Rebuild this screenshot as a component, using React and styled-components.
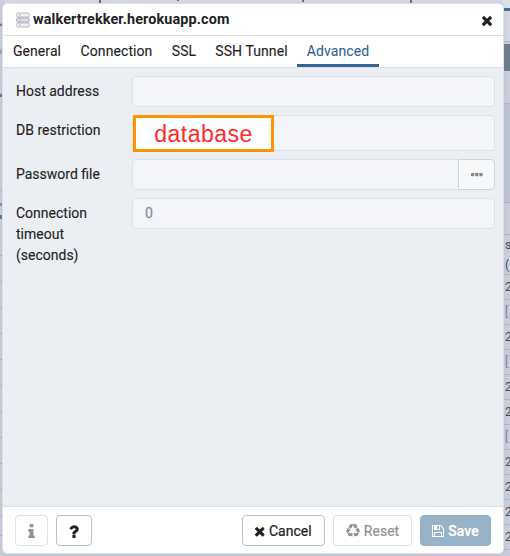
import React from 'react';
import styled, { createGlobalStyle } from 'styled-components';

const GlobalStyle = createGlobalStyle`
  * { box-sizing: border-box; }
  body { margin: 0; overflow: hidden; font-family: Roboto, "Liberation Sans", sans-serif; color: #222; }
  button, input { font: inherit; }
`;

const Screen = styled.div`
  position: relative;
  width: 510px;
  height: 556px;
  overflow: hidden;
  background: #c9cddb;
`;

const Backdrop = styled.div`
  display: grid;
  grid-template-columns: 4px 1fr 7px;
  height: 556px;
`;

const Column = styled.div`
  display: flex;
  flex-direction: column;
  overflow: hidden;
`;

const TopEdge = styled.div`
  height: 4px;
  display: grid;
  grid-template-columns: 78px 125px 108px 1fr;
  padding-left: 95px;
  background: #d9dbe3;
`;

const Tick = styled.i`
  width: 2px;
  height: ${(p) => p.$h || 2}px;
  background: #656975;
`;

const Strip = styled.div`
  flex: none;
  height: ${(p) => p.$h}px;
  background: ${(p) => p.$bg || '#cbcfdb'};
  border-bottom: ${(p) => (p.$line ? '1px solid #adb4c6' : '0')};
`;

const GridCell = styled.div`
  flex: none;
  height: ${(p) => p.$h || 25}px;
  padding-left: 2px;
  border-bottom: 1px solid #b0b6c7;
  background: #cbcfdb;
  color: ${(p) => (p.$muted ? '#7984a1' : '#454a56')};
  font-size: 12px;
  line-height: ${(p) => p.$lh || 24}px;
  white-space: pre;
`;

const Dialog = styled.section`
  position: absolute;
  left: 2px;
  top: 3px;
  width: 502px;
  height: 551px;
  display: flex;
  flex-direction: column;
  overflow: hidden;
  background: #fff;
  border: 1px solid #dde0e6;
  border-radius: 5px;
  box-shadow: 0 0 5px #8d97b044;
`;

const Header = styled.header`
  flex: none;
  display: flex;
  align-items: center;
  height: 32px;
  padding: 0 11px 0 13px;
  border-bottom: 1px solid #dde0e6;
`;

const Title = styled.h1`
  margin: 0 auto 0 3px;
  font-size: 14.4px;
  font-weight: 700;
  line-height: 30px;
  letter-spacing: 0.13px;
`;

const IconButton = styled.button`
  display: flex;
  padding: 0;
  margin-top: 1px;
  border: 0;
  background: none;
  color: #222;
`;

const Tabs = styled.nav`
  flex: none;
  display: flex;
  height: 32px;
  border-bottom: 1px solid #dde0e6;
`;

const Tab = styled.button`
  width: ${(p) => p.$w}px;
  padding: 2px 0 0;
  border: 0;
  border-bottom: 3px solid ${(p) => (p.$active ? '#326690' : 'transparent')};
  background: none;
  color: ${(p) => (p.$active ? '#326690' : '#222')};
  font-size: 14px;
  letter-spacing: 0.08px;
  line-height: 26px;
  white-space: nowrap;
  -webkit-text-stroke: 0.1px currentColor;
`;

const Form = styled.div`
  flex: 1;
  display: flex;
  flex-direction: column;
  gap: 8px;
  padding: 8px 8px 0 13px;
  background: #ebeef3;
`;

const Field = styled.div`
  display: grid;
  grid-template-columns: 116px 363px;
  min-height: ${(p) => p.$h || 31}px;
  align-items: start;
`;

const Label = styled.label`
  padding-top: 5px;
  width: 90px;
  font-size: 14px;
  line-height: 21px;
  -webkit-text-stroke: 0.1px currentColor;
`;

const Control = styled.div`
  display: flex;
  align-items: stretch;
  height: ${(p) => p.$h || 31}px;
  border: 1px solid #dde0e6;
  border-radius: 4px;
  background: #f3f5f9;
`;

const Value = styled.span`
  padding-left: 12px;
  color: #848ea6;
  font-size: 14px;
  line-height: 29px;
  -webkit-text-stroke: 0.3px currentColor;
`;

const Browse = styled.button`
  display: flex;
  align-items: center;
  justify-content: center;
  width: 37px;
  margin: -1px -1px -1px auto;
  padding: 0;
  border: 1px solid #ccd4df;
  border-radius: 0 4px 4px 0;
  background: #f6f8fa;
  color: #858585;
`;

const Callout = styled.div`
  width: 141px;
  height: 37px;
  margin: -1px 0 0;
  border: 3px solid #ff9300;
  background: #fff;
  color: #ff2a2a;
  font: 23px/32px "Liberation Sans", sans-serif;
  letter-spacing: 0.5px;
  text-align: center;
`;

const Footer = styled.footer`
  flex: none;
  display: flex;
  gap: 8px;
  height: 47px;
  padding: 8px 12px 0;
  border-top: 1px solid #dde0e6;
`;

const FooterButton = styled.button`
  display: flex;
  align-items: center;
  justify-content: center;
  gap: 4px;
  width: ${(p) => p.$w}px;
  height: 31px;
  padding: 0;
  margin-left: ${(p) => (p.$push ? 'auto' : 0)};
  border: 1px solid #b9bfce;
  border-radius: 4px;
  background: #fff;
  color: #222;
  font-size: 14px;
  letter-spacing: 0;
  -webkit-text-stroke: 0.2px currentColor;
  ${(p) => p.$disabled && 'color: #929292; border-color: #dfe1e8;'}
  ${(p) => p.$primary && 'background: #98b2c7; border-color: #98b2c7; color: #fff; font-weight: 500;'}
`;

const glyphs = {
  times: ['302 238 1188 1188', 'M1490 1322q0 40-28 68l-136 136q-28 28-68 28t-68-28l-294-294-294 294q-28 28-68 28t-68-28l-136-136q-28-28-28-68t28-68l294-294-294-294q-28-28-28-68t28-68l136-136q28-28 68-28t68 28l294 294 294-294q28-28 68-28t68 28l136 136q28 28 28 68t-28 68l-294 294 294 294q28 28 28 68z'],
  info: ['576 128 640 1408', 'M1216 1344v128q0 26-19 45t-45 19h-512q-26 0-45-19t-19-45v-128q0-26 19-45t45-19h64v-384h-64q-26 0-45-19t-19-45v-128q0-26 19-45t45-19h384q26 0 45 19t19 45v576h64q26 0 45 19t19 45zm-128-1152v192q0 26-19 45t-45 19h-256q-26 0-45-19t-19-45v-192q0-26 19-45t45-19h256q26 0 45 19t19 45z'],
  question: ['448 128 960 1408', 'M1088 1256v240q0 16-12 28t-28 12h-240q-16 0-28-12t-12-28v-240q0-16 12-28t28-12h240q16 0 28 12t12 28zm316-600q0 54-15.5 101t-35 76.5-55 59.5-57.5 43.5-61 35.5q-41 23-68.5 65t-27.5 67q0 17-12 32.5t-28 15.5h-240q-15 0-25.5-18.5t-10.5-37.5v-45q0-83 65-156.5t143-108.5q59-27 84-56t25-76q0-42-46.5-74t-107.5-32q-65 0-108 29-35 25-107 115-13 16-31 16-12 0-25-8l-164-125q-13-10-15.5-25t5.5-28q160-266 464-266 80 0 161 31t146 83 106 127.5 41 158.5z'],
  recycle: ['0 0 1792 1792', 'M836 1169l-15 368-2 22-420-29q-36-3-67-31.5t-47-65.5q-11-27-14.5-55t4-65 12-55 21.5-64 19-53q78 12 509 28zm-387-586l180 379-147-92q-63 72-111.5 144.5t-72.5 125-39.5 94.5-18.5 63l-4 21-190-357q-17-26-18-56t6-47l8-18q35-63 114-188l-140-86zm1231 517l-188 359q-12 29-36.5 46.5t-43.5 20.5l-18 4q-71 7-219 12l8 164-230-367 211-362 7 173q170 16 283 5t170-33zm-785-924q-47 63-265 435l-317-187-19-12 225-356q20-31 60-45t80-10q24 2 48.5 12t42 21 41.5 33 36 34.5 36 39.5 32 35zm655 307l212 363q18 37 12.5 76t-27.5 74q-13 20-33 37t-38 28-48.5 22-47 16-51.5 14-46 12q-34-72-265-436l313-195zm-143-226l142-83-220 373-419-20 151-86q-34-89-75-166t-75.5-123.5-64.5-80-47-46.5l-17-13 405 1q31-3 58 10.5t39 28.5l11 15q39 61 112 190z'],
  save: ['128 128 1536 1536', 'M512 1536h768v-384h-768v384zm896 0h128v-896q0-14-10-38.5t-20-34.5l-281-281q-10-10-34-20t-39-10v416q0 40-28 68t-68 28h-576q-40 0-68-28t-28-68v-416h-128v1280h128v-416q0-40 28-68t68-28h832q40 0 68 28t28 68v416zm-384-928v-320q0-13-9.5-22.5t-22.5-9.5h-192q-13 0-22.5 9.5t-9.5 22.5v320q0 13 9.5 22.5t22.5 9.5h192q13 0 22.5-9.5t9.5-22.5zm640 32v928q0 40-28 68t-68 28h-1344q-40 0-68-28t-28-68v-1344q0-40 28-68t68-28h928q40 0 88 20t76 48l280 280q28 28 48 76t20 88z'],
};

const Glyph = ({ name, w, h }) => (
  <svg width={w} height={h} viewBox={glyphs[name][0]} fill="currentColor" overflow="visible" aria-hidden="true">
    <path d={glyphs[name][1]} />
  </svg>
);

const ServerIcon = () => (
  <svg width="14" height="16" viewBox="0 0 14 16" aria-hidden="true">
    <path d="M3 5v6M11 5v6" stroke="#b9b9b9" />
    <rect x=".6" y="1" width="12.8" height="4" rx="1.3" fill="#f0f0f0" stroke="#b9b9b9" />
    <rect x=".6" y="11" width="12.8" height="4" rx="1.3" fill="#f0f0f0" stroke="#b9b9b9" />
    <rect x=".6" y="6" width="12.8" height="4" rx="1.3" fill="#dedeea" stroke="#aaa7c3" />
    <path d="M3 3h1.5M3 13h1.5M3 8h1.5" stroke="#aaa" />
  </svg>
);

const tabs = [['General', 68], ['Connection', 91], ['SSL', 44], ['SSH Tunnel', 91], ['Advanced', 82]];
const results = ['2', '[', '2', '[', '2', '2', '[', '2', '2', '2', '2'];

const leftStrips = [
  [12, 0], [12, 1], [2, 0, '#6f7687'], [24, 1], [4, 0, '#8baac3'], [40, 1], [3, 0, '#507b9f'],
  [94, 1], [12, 0], [3, 0, '#6f98b8'], [9, 0], [4, 0, '#507b9f'], [37, 1], [26, 1], [26, 1],
  [26, 1], [26, 1], [26, 1], [26, 1], [26, 1], [26, 1], [26, 1], [26, 1], [20, 1],
];

export default function App() {
  return (
    <Screen>
      <GlobalStyle />
      <Backdrop aria-hidden="true">
        <Column>
          {leftStrips.map(([h, line, bg], i) => <Strip key={i} $h={h} $line={line} $bg={bg} />)}
        </Column>
        <Column>
          <TopEdge><Tick $h={3} /><Tick $h={1} /><Tick /><Tick $h={3} /></TopEdge>
        </Column>
        <Column>
          <Strip $h={8} $bg="#dfe2e9" />
          <Strip $h={3} $bg="#426e94" />
          <Strip $h={31} $bg="#d6d8e3" $line />
          <Strip $h={2} />
          <Strip $h={27} $bg="#6c7b8e" />
          <Strip $h={33} $line />
          <Strip $h={99} $bg="#bec5d2" $line />
          <Strip $h={32} $line />
          <GridCell $h={40} $lh={20}>{'s\n('}</GridCell>
          {results.map((r, i) => <GridCell key={i} $muted={r === '['}>{r}</GridCell>)}
        </Column>
      </Backdrop>

      <Dialog role="dialog" aria-label="walkertrekker.herokuapp.com">
        <Header>
          <ServerIcon />
          <Title>walkertrekker.herokuapp.com</Title>
          <IconButton aria-label="Close"><Glyph name="times" w={10} h={10} /></IconButton>
        </Header>
        <Tabs>
          {tabs.map(([name, w]) => <Tab key={name} $w={w} $active={name === 'Advanced'}>{name}</Tab>)}
        </Tabs>
        <Form>
          <Field><Label>Host address</Label><Control /></Field>
          <Field $h={36}>
            <Label>DB restriction</Label>
            <Control $h={36}><Callout>database</Callout></Control>
          </Field>
          <Field>
            <Label>Password file</Label>
            <Control>
              <Browse aria-label="Browse">
                <svg width="12" height="4" viewBox="0 0 12 4" fill="currentColor">
                  <rect width="3.2" height="3.2" rx=".6" />
                  <rect x="4.2" width="3.2" height="3.2" rx=".6" />
                  <rect x="8.4" width="3.2" height="3.2" rx=".6" />
                </svg>
              </Browse>
            </Control>
          </Field>
          <Field><Label>Connection timeout (seconds)</Label><Control><Value>0</Value></Control></Field>
        </Form>
        <Footer>
          <FooterButton $w={33} $disabled aria-label="Info"><Glyph name="info" w={7} h={14} /></FooterButton>
          <FooterButton $w={36} aria-label="Help"><Glyph name="question" w={10} h={14} /></FooterButton>
          <FooterButton $w={83} $push><Glyph name="times" w={9.5} h={9.5} />Cancel</FooterButton>
          <FooterButton $w={79} $disabled><Glyph name="recycle" w={14} h={14} />Reset</FooterButton>
          <FooterButton $w={71} $disabled $primary><Glyph name="save" w={12} h={12} />Save</FooterButton>
        </Footer>
      </Dialog>
    </Screen>
  );
}
